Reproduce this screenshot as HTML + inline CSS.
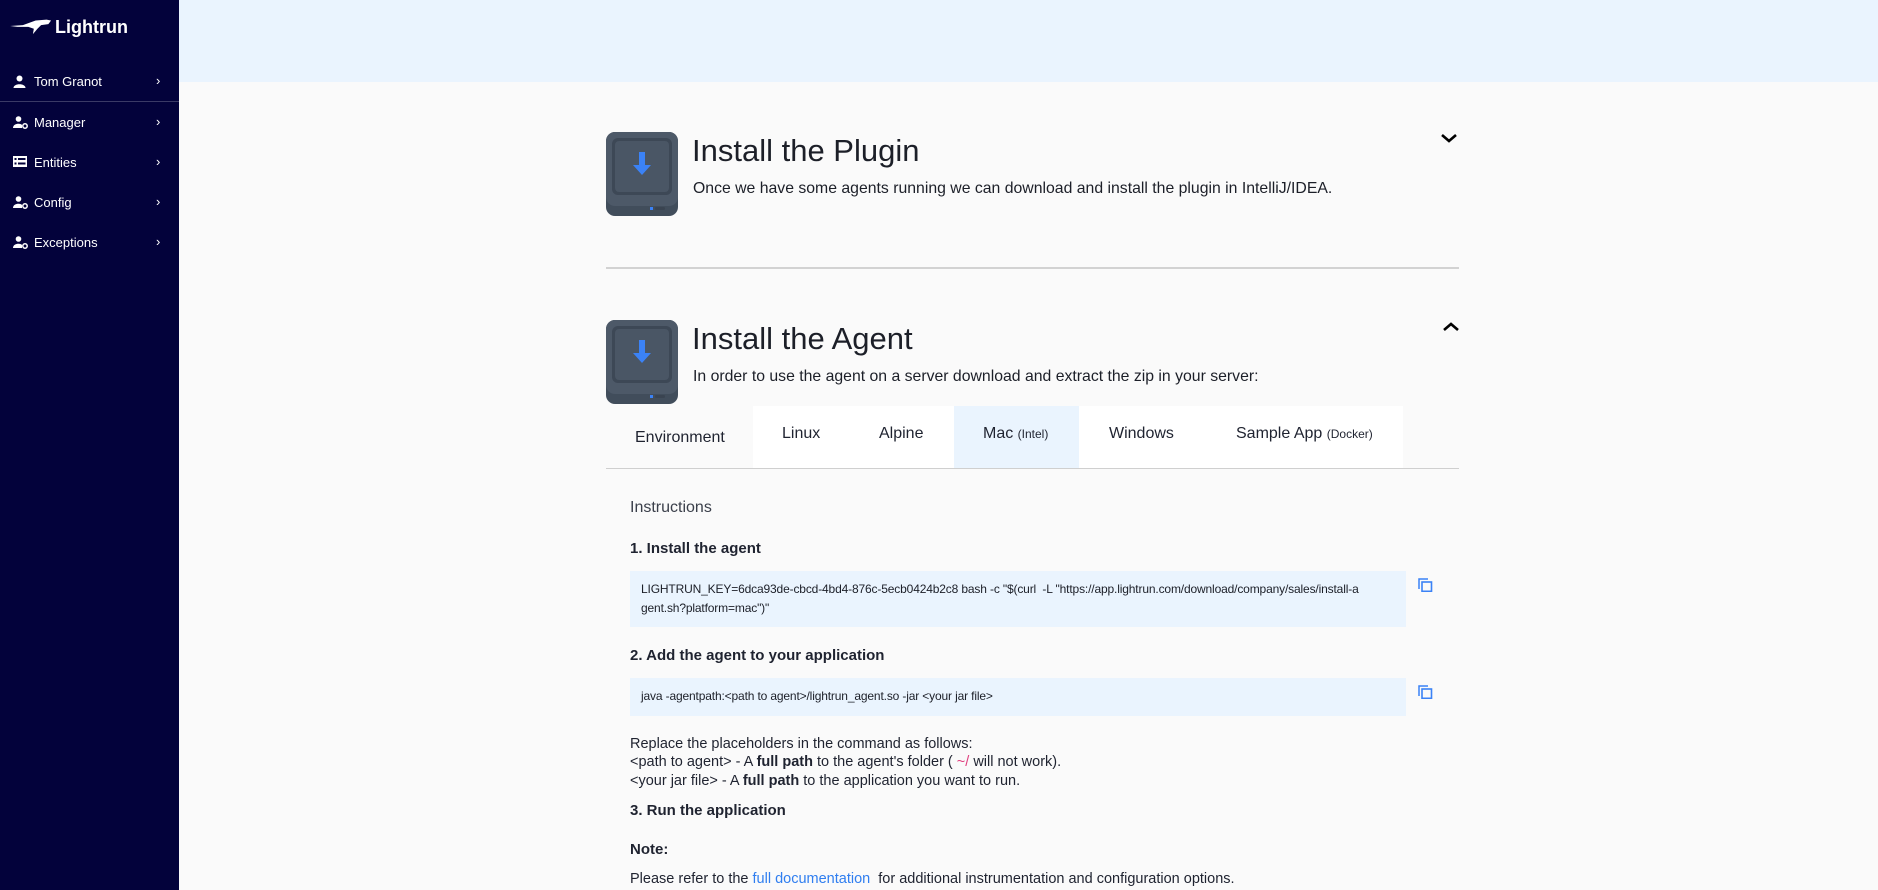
<!DOCTYPE html>
<html><head><meta charset="utf-8"><style>
*{margin:0;padding:0;box-sizing:border-box}
body{width:1878px;height:890px;overflow:hidden;background:#fafafa;font-family:"Liberation Sans",sans-serif;color:#1f2330;position:relative}
.side{position:absolute;left:0;top:0;width:179px;height:890px;background:#03023b;color:#fff}
.top{position:absolute;left:179px;top:0;right:0;height:82px;background:#eaf4fe}
.logo{position:absolute;left:9px;top:16px;font-size:18px;font-weight:bold;color:#fff}
.nav{position:absolute;left:0;width:179px;height:20px;font-size:13px;color:#fff}
.nav span.t{position:absolute;left:34px;top:2px}
.nav span.c{position:absolute;left:156px;top:1px;font-size:13px}
.nav svg{position:absolute;left:13px;top:3px}
.abs{position:absolute}
h1{position:absolute;font-weight:normal;font-size:31px;color:#1c1f28;white-space:nowrap}
.sub{position:absolute;font-size:15.8px;color:#1c1f28;white-space:nowrap}
.tab{position:absolute;top:434px;font-size:16px;transform:translateY(-50%);white-space:nowrap}
.tab small{font-size:12px}
.code{position:absolute;left:630px;width:776px;background:#eaf4fe;font-size:12px;letter-spacing:-0.15px;color:#1c1f28;padding-left:11px;line-height:19px;white-space:nowrap}
.b{position:absolute;left:630px;font-weight:bold;font-size:15px;white-space:nowrap}
.p{position:absolute;left:630px;font-size:14.5px;white-space:nowrap}
</style></head><body>
<div class="side">
 <div class="logo"><svg width="46" height="20" viewBox="0 0 48 22" style="vertical-align:-3px"><path d="M0 11 L14 10 L28 5 L40 4 L45 5 L42 9 L34 10 L30 14 L25 20 L26 14 L20 12 L8 12 Z" fill="#fff"/></svg>Lightrun</div>
 <div class="nav" style="top:72px"><svg width="13" height="13" viewBox="0 0 13 13"><circle cx="6.5" cy="3.5" r="3" fill="#fff"/><path d="M0.5 13 C0.5 8 12.5 8 12.5 13Z" fill="#fff"/></svg><span class="t">Tom Granot</span><span class="c">›</span></div>
 <div style="position:absolute;left:0;top:101px;width:179px;height:1px;background:#3a3a66"></div>
 <div class="nav" style="top:113px"><svg width="15" height="13" viewBox="0 0 15 13"><circle cx="5.5" cy="3" r="2.8" fill="#fff"/><path d="M0 12 C0 7 8 7 9 9 L9 12Z" fill="#fff"/><circle cx="12" cy="10" r="2.2" fill="none" stroke="#fff" stroke-width="1.5"/></svg><span class="t">Manager</span><span class="c">›</span></div>
 <div class="nav" style="top:153px"><svg width="14" height="12" viewBox="0 0 14 12"><rect width="14" height="11" fill="#fff"/><rect x="1.5" y="2" width="2" height="2" fill="#03023b"/><rect x="1.5" y="6.5" width="2" height="2" fill="#03023b"/><rect x="5" y="2" width="7.5" height="2" fill="#03023b"/><rect x="5" y="6.5" width="7.5" height="2" fill="#03023b"/></svg><span class="t">Entities</span><span class="c">›</span></div>
 <div class="nav" style="top:193px"><svg width="15" height="13" viewBox="0 0 15 13"><circle cx="5.5" cy="3" r="2.8" fill="#fff"/><path d="M0 12 C0 7 8 7 9 9 L9 12Z" fill="#fff"/><circle cx="12" cy="10" r="2.2" fill="none" stroke="#fff" stroke-width="1.5"/></svg><span class="t">Config</span><span class="c">›</span></div>
 <div class="nav" style="top:233px"><svg width="15" height="13" viewBox="0 0 15 13"><circle cx="5.5" cy="3" r="2.8" fill="#fff"/><path d="M0 12 C0 7 8 7 9 9 L9 12Z" fill="#fff"/><circle cx="12" cy="10" r="2.2" fill="none" stroke="#fff" stroke-width="1.5"/></svg><span class="t">Exceptions</span><span class="c">›</span></div>
</div>
<div class="top"></div>

<svg class="abs" style="left:606px;top:132px" width="72" height="84" viewBox="0 0 72 84"><rect width="72" height="84" rx="9" fill="#414d5b"/><rect width="72" height="74" rx="9" fill="#4d5968"/><rect x="6" y="6" width="60" height="57" rx="6" fill="#3d4856"/><rect x="9" y="9" width="54" height="51" rx="4" fill="#4a5665"/><path d="M33 20h6v13h6l-9 10-9-10h6z" fill="#3b82f6"/><rect x="44" y="75" width="3" height="3" fill="#3b82f6"/><rect x="49" y="75" width="10" height="3" rx="1.5" fill="#3a4451"/></svg>
<h1 style="left:692px;top:133px">Install the Plugin</h1>
<div class="sub" style="left:693px;top:180px">Once we have some agents running we can download and install the plugin in IntelliJ/IDEA.</div>
<svg class="abs" style="left:1440px;top:132px" width="18" height="12" viewBox="0 0 18 12"><path d="M2 3l7 6 7-6" fill="none" stroke="#000" stroke-width="2.6"/></svg>
<div class="abs" style="left:606px;top:267px;width:853px;height:2px;background:#d2d2d2"></div>

<svg class="abs" style="left:606px;top:320px" width="72" height="84" viewBox="0 0 72 84"><rect width="72" height="84" rx="9" fill="#414d5b"/><rect width="72" height="74" rx="9" fill="#4d5968"/><rect x="6" y="6" width="60" height="57" rx="6" fill="#3d4856"/><rect x="9" y="9" width="54" height="51" rx="4" fill="#4a5665"/><path d="M33 20h6v13h6l-9 10-9-10h6z" fill="#3b82f6"/><rect x="44" y="75" width="3" height="3" fill="#3b82f6"/><rect x="49" y="75" width="10" height="3" rx="1.5" fill="#3a4451"/></svg>
<h1 style="left:692px;top:321px">Install the Agent</h1>
<div class="sub" style="left:693px;top:368px">In order to use the agent on a server download and extract the zip in your server:</div>
<svg class="abs" style="left:1442px;top:321px" width="18" height="12" viewBox="0 0 18 12"><path d="M2 9l7-6 7 6" fill="none" stroke="#000" stroke-width="2.6"/></svg>

<div class="abs" style="left:753px;top:406px;width:650px;height:62px;background:#fff"></div>
<div class="abs" style="left:954px;top:406px;width:125px;height:62px;background:#eaf4fe"></div>
<div class="abs" style="left:606px;top:468px;width:853px;height:1px;background:#cfcfcf"></div>
<div class="tab" style="left:635px;top:438px">Environment</div>
<div class="tab" style="left:782px">Linux</div>
<div class="tab" style="left:879px">Alpine</div>
<div class="tab" style="left:983px">Mac <small>(Intel)</small></div>
<div class="tab" style="left:1109px">Windows</div>
<div class="tab" style="left:1236px">Sample App <small>(Docker)</small></div>

<div class="p" style="left:630px;top:499px;font-size:16px;color:#3a3f4a">Instructions</div>
<div class="b" style="top:540px">1. Install the agent</div>
<div class="code" style="top:571px;height:56px;padding-top:9px">LIGHTRUN_KEY=6dca93de-cbcd-4bd4-876c-5ecb0424b2c8 bash -c "$(curl &nbsp;-L "https://app.lightrun.com/download/company/sales/install-a<br>gent.sh?platform=mac")"</div>
<svg class="abs" style="left:1418px;top:578px" width="15" height="14" viewBox="0 0 15 14"><path d="M1 11V1h9" fill="none" stroke="#3b82f6" stroke-width="1.5"/><rect x="4" y="4" width="9.5" height="9.3" fill="none" stroke="#3b82f6" stroke-width="1.6"/></svg>
<div class="b" style="top:647px">2. Add the agent to your application</div>
<div class="code" style="top:678px;height:38px;padding-top:9px">java -agentpath:&lt;path to agent&gt;/lightrun_agent.so -jar &lt;your jar file&gt;</div>
<svg class="abs" style="left:1418px;top:685px" width="15" height="14" viewBox="0 0 15 14"><path d="M1 11V1h9" fill="none" stroke="#3b82f6" stroke-width="1.5"/><rect x="4" y="4" width="9.5" height="9.3" fill="none" stroke="#3b82f6" stroke-width="1.6"/></svg>
<div class="p" style="top:736px">Replace the placeholders in the command as follows:</div>
<div class="p" style="top:754px">&lt;path to agent&gt; - A <b>full path</b> to the agent's folder ( <span style="color:#e0417f">~/</span> will not work).</div>
<div class="p" style="top:773px">&lt;your jar file&gt; - A <b>full path</b> to the application you want to run.</div>
<div class="b" style="top:802px">3. Run the application</div>
<div class="b" style="top:841px">Note:</div>
<div class="p" style="top:871px">Please refer to the <span style="color:#2f7ef0">full documentation</span> &nbsp;for additional instrumentation and configuration options.</div>
</body></html>
